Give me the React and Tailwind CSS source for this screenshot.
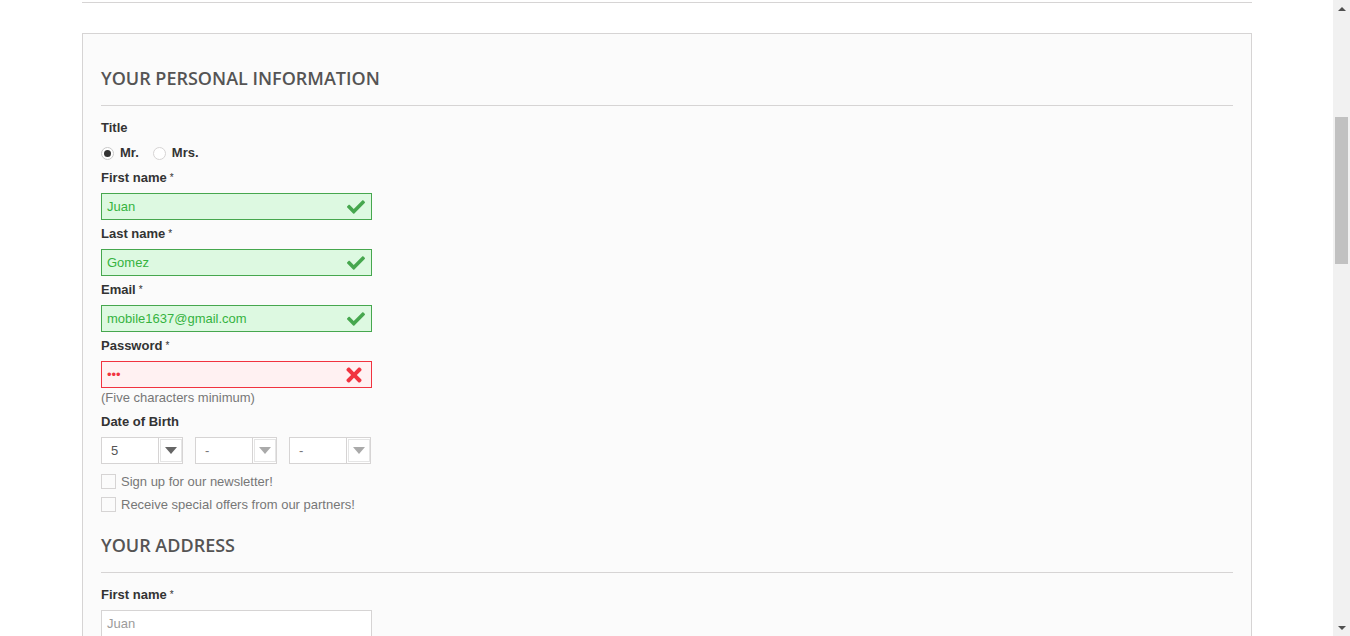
import { FaCheck, FaTimes } from "react-icons/fa";

function Label({ text, req }) {
  return (
    <div className="h-[18px] leading-[18px] text-[13px] font-bold text-[#333]">
      {text}
      {req && <sup className="ml-[3px] text-[10px] font-normal relative top-[-1px]">*</sup>}
    </div>
  );
}

function Field({ label, value, state }) {
  const styles = {
    ok: "bg-[#ddf9e1] border-[#46a74e] text-[#35b33f]",
    err: "bg-[#fff1f2] border-[#f13340] text-[#f13340]",
    none: "bg-white border-[#d6d4d4] text-[#9c9b9b]",
  };
  return (
    <div className="mt-[5px]">
      <Label text={label} req />
      <div className={`mt-[6px] w-[271px] h-[27px] border flex items-center justify-between pl-[5px] pr-[6px] text-[13px] ${styles[state]}`}>
        <span>{value}</span>
        {state === "ok" && <FaCheck className="text-[#46a74e]" size={18} />}
        {state === "err" && <FaTimes className="text-[#f13340]" size={22} />}
      </div>
    </div>
  );
}

function Select({ value, dark }) {
  return (
    <div className="w-[82px] h-[27px] border border-[#d6d4d4] bg-white flex items-center justify-between">
      <span className={`pl-[9px] text-[13px] ${dark ? "text-[#555]" : "text-[#777]"}`}>{value}</span>
      <div className="w-[24px] h-[25px] border-l border-[#d6d4d4] flex items-center justify-center">
        <div className="w-[22px] h-[23px] border border-[#e5e5e5] bg-white flex items-center justify-center">
          <div className={`w-0 h-0 border-l-[6px] border-r-[6px] border-t-[7px] border-l-transparent border-r-transparent ${dark ? "border-t-[#666]" : "border-t-[#aaa]"}`} />
        </div>
      </div>
    </div>
  );
}

function Check({ text }) {
  return (
    <div className="h-[23px] flex items-center gap-[5px] text-[13px] text-[#777]">
      <div className="w-[15px] h-[15px] border border-[#d6d4d4] bg-[#fbfbfb]" />
      <span>{text}</span>
    </div>
  );
}

function Heading({ text }) {
  return (
    <div className="pb-[16px] border-b border-[#d6d4d4]">
      <h3 className="h-[22px] leading-[22px] text-[18px] font-semibold uppercase text-[#555454]" style={{ fontFamily: '"Open Sans", sans-serif' }}>
        {text}
      </h3>
    </div>
  );
}

export default function App() {
  return (
    <div className="w-screen h-screen overflow-hidden flex bg-white" style={{ fontFamily: '"Liberation Sans", Arial, sans-serif' }}>
      <div className="flex-1">
        <div className="w-[1170px] ml-[82px]">
          <div className="h-[3px] border-b border-[#d6d4d4]" />
          <div className="mt-[30px] border border-[#d6d4d4] bg-[#fbfbfb] px-[18px] pt-[33px]">
            <Heading text="Your personal information" />
            <div className="mt-[13px]">
              <Label text="Title" />
              <div className="mt-[7px] h-[18px] flex items-center text-[13px] font-bold text-[#333]">
                <div className="w-[13px] h-[13px] rounded-full border border-[#c9c9c9] bg-white flex items-center justify-center">
                  <div className="w-[7px] h-[7px] rounded-full bg-[#333]" />
                </div>
                <span className="ml-[6px]">Mr.</span>
                <div className="ml-[14px] w-[13px] h-[13px] rounded-full border border-[#d6d4d4] bg-white" />
                <span className="ml-[6px]">Mrs.</span>
              </div>
              <div className="pt-[2px]">
                <Field label="First name" value="Juan" state="ok" />
              </div>
              <Field label="Last name" value="Gomez" state="ok" />
              <Field label="Email" value="mobile1637@gmail.com" state="ok" />
              <Field label="Password" value="•••" state="err" />
              <div className="mt-[1px] h-[18px] leading-[18px] text-[13px] text-[#777]">(Five characters minimum)</div>
              <div className="mt-[6px]">
                <Label text="Date of Birth" />
                <div className="mt-[6px] flex gap-[12px]">
                  <Select value="5" dark />
                  <Select value="-" />
                  <Select value="-" />
                </div>
              </div>
              <div className="mt-[6px]">
                <Check text="Sign up for our newsletter!" />
                <Check text="Receive special offers from our partners!" />
              </div>
            </div>
            <div className="mt-[18px]">
              <Heading text="Your address" />
            </div>
            <div className="mt-[13px]">
              <Field label="First name" value="Juan" state="none" />
            </div>
            <div className="h-[200px]" />
          </div>
        </div>
      </div>
      <div className="w-[17px] h-full bg-[#f1f1f1] flex flex-col items-center">
        <div className="h-[17px] flex items-center justify-center">
          <div className="w-0 h-0 border-l-[4px] border-r-[4px] border-b-[4px] border-l-transparent border-r-transparent border-b-[#505050]" />
        </div>
        <div className="mt-[100px] w-[13px] h-[147px] bg-[#c1c1c1]" />
        <div className="flex-1" />
        <div className="h-[17px] flex items-center justify-center">
          <div className="w-0 h-0 border-l-[4px] border-r-[4px] border-t-[4px] border-l-transparent border-r-transparent border-t-[#505050]" />
        </div>
      </div>
    </div>
  );
}
